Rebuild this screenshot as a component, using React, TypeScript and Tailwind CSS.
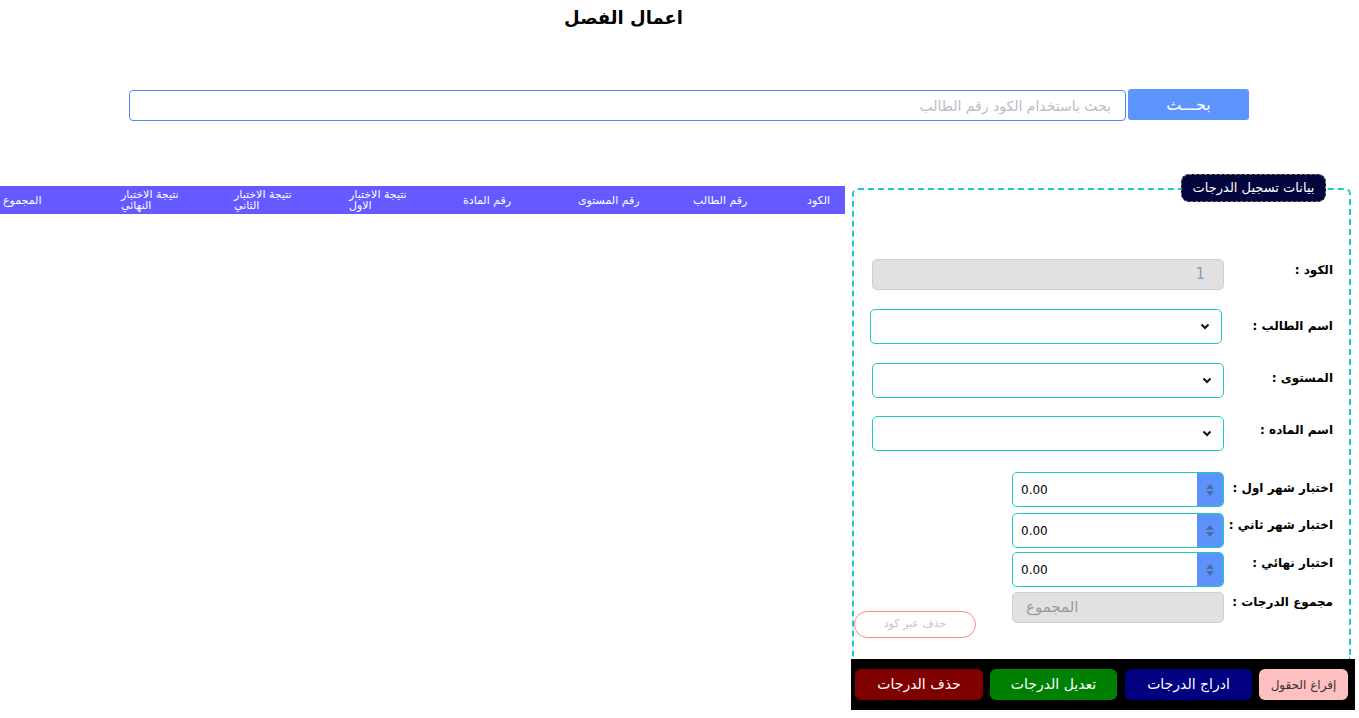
import React from "react"

const headers = [
  { t: "المجموع" },
  { t: "نتيجة الاختبار", b: "النهائي" },
  { t: "نتيجة الاختبار", b: "الثاني" },
  { t: "نتيجة الاختبار", b: "الاول" },
  { t: "رقم المادة" },
  { t: "رقم المستوى" },
  { t: "رقم الطالب" },
  { t: "الكود" },
]

function Chevron() {
  return (
    <svg width="10" height="7" viewBox="0 0 10 7" className="shrink-0">
      <path d="M1.5 1.5 L5 5 L8.5 1.5" fill="none" stroke="#111" strokeWidth="2" />
    </svg>
  )
}

function SelectBox({ offset = false }: { offset?: boolean }) {
  return (
    <div
      dir="ltr"
      className={
        "flex h-[35px] w-[352px] items-center justify-end rounded-[5px] border border-[#1fc6c6] bg-white pr-[11px] " +
        (offset ? "mr-[2px]" : "")
      }
    >
      <Chevron />
    </div>
  )
}

function NumberBox() {
  return (
    <div dir="ltr" className="flex h-[35px] w-[212px] overflow-hidden rounded-[5px] border border-[#1fc6c6] bg-white">
      <div className="flex flex-1 items-center pl-[8px] text-[12px] text-black">0.00</div>
      <div className="flex w-[26px] flex-col items-center justify-center gap-[2px] bg-[#5e92fb]">
        <svg width="8" height="5" viewBox="0 0 8 5">
          <path d="M0 5 L4 0 L8 5 Z" fill="#4a6aa8" />
        </svg>
        <svg width="8" height="5" viewBox="0 0 8 5">
          <path d="M0 0 L4 5 L8 0 Z" fill="#4a6aa8" />
        </svg>
      </div>
    </div>
  )
}

function Label({ text, pt }: { text: string; pt: string }) {
  return (
    <div className={"w-[125px] shrink-0 whitespace-nowrap pr-[16px] text-right text-[12px] font-bold leading-[20px] text-black " + pt}>
      {text}
    </div>
  )
}

export default function App() {
  return (
    <div className="relative h-[718px] w-[1359px] overflow-hidden bg-white font-['DejaVu_Sans',sans-serif]">
      <div dir="rtl" className="w-[1247px] pt-[6px] text-center text-[18px] font-bold leading-[24px] text-black">
        اعمال الفصل
      </div>

      <div className="ml-[129px] mt-[60px] flex items-start">
        <input
          dir="rtl"
          placeholder="بحث باستخدام الكود رقم الطالب"
          className="h-[31px] w-[997px] rounded-[4px] border border-[#4f86ff] pr-[14px] text-[14px] outline-none placeholder:text-[#b9bcc6]"
        />
        <button className="-mt-[1px] ml-[2px] h-[31px] w-[121px] rounded-[3px] bg-[#5e95fc] text-[16px] text-white">
          بحـــث
        </button>
      </div>

      <div className="mt-[65px] flex items-start">
        <div className="w-[845px]">
          <div className="grid h-[28px] grid-cols-[118px_113px_115px_114px_115px_115px_114px_41px] bg-[#655aff]">
            {headers.map((h, i) => (
              <div key={i} className="flex items-center pl-[3px] text-[11px] leading-[11px] text-white">
                <div dir="rtl" className="whitespace-nowrap text-left">
                  {h.t}
                  {h.b && (
                    <>
                      <br />
                      {h.b}
                    </>
                  )}
                </div>
              </div>
            ))}
          </div>
        </div>

        <div className="ml-[6px] w-[504px]">
          <div className="relative ml-[1px] mt-[2px] h-[471px] w-[499px] rounded-t-[6px] border-2 border-b-0 border-dashed border-[#1ec8c8]">
            <div className="absolute right-[23px] top-[-16px] flex h-[28px] w-[145px] items-center justify-center rounded-[8px] border border-dashed border-[#777] bg-[#05053d] text-[13px] text-white">
              بيانات تسجيل الدرجات
            </div>

            <div dir="rtl" className="pt-[69px]">
              <div className="flex items-start">
                <Label text="الكود :" pt="pt-[1px]" />
                <div className="flex h-[31px] w-[352px] items-center rounded-[5px] border border-[#cfcfcf] bg-[#e1e1e1] pr-[18px] text-[15px] text-[#8a9cc0]">
                  1
                </div>
              </div>

              <div className="mt-[19px] flex items-start">
                <Label text="اسم الطالب :" pt="pt-[7px]" />
                <SelectBox offset />
              </div>

              <div className="mt-[19px] flex items-start">
                <Label text="المستوى :" pt="pt-[5px]" />
                <SelectBox />
              </div>

              <div className="mt-[18px] flex items-start">
                <Label text="اسم الماده :" pt="pt-[4px]" />
                <SelectBox />
              </div>

              <div className="mt-[21px] flex items-start">
                <Label text="اختبار شهر اول :" pt="pt-[6px]" />
                <NumberBox />
              </div>

              <div className="mt-[6px] flex items-start">
                <Label text="اختبار شهر ثاني :" pt="pt-[2px]" />
                <NumberBox />
              </div>

              <div className="mt-[4px] flex items-start">
                <Label text="اختبار نهائي :" pt="pt-[1px]" />
                <NumberBox />
              </div>

              <div className="mt-[5px] flex items-start">
                <Label text="مجموع الدرجات :" pt="pt-[0px]" />
                <div dir="ltr" className="flex h-[31px] w-[212px] items-center rounded-[5px] border border-[#cfcfcf] bg-[#e1e1e1] pl-[13px] text-[15px] text-[#9a9a9a]">
                  المجموع
                </div>
                <button className="mr-auto mt-[19px] h-[27px] w-[122px] rounded-full border border-[#ff8585] bg-white text-[11px] text-[#c4c4c4]">
                  حذف عبر كود
                </button>
              </div>
            </div>
          </div>

          <div dir="rtl" className="flex h-[51px] w-[504px] items-start bg-black pr-[7px] pt-[10px]">
            <button className="h-[31px] w-[89px] rounded-[6px] bg-[#ffc0c0] text-[12px] text-[#333]">
              إفراغ الحقول
            </button>
            <button className="mr-[7px] h-[31px] w-[127px] rounded-[6px] bg-[#000080] text-[14px] text-white">
              ادراج الدرجات
            </button>
            <button className="mr-[8px] h-[31px] w-[127px] rounded-[6px] bg-[#008000] text-[14px] text-white">
              تعديل الدرجات
            </button>
            <button className="mr-[7px] h-[31px] w-[128px] rounded-[6px] bg-[#800000] text-[14px] text-white">
              حذف الدرجات
            </button>
          </div>
        </div>
      </div>
    </div>
  )
}
